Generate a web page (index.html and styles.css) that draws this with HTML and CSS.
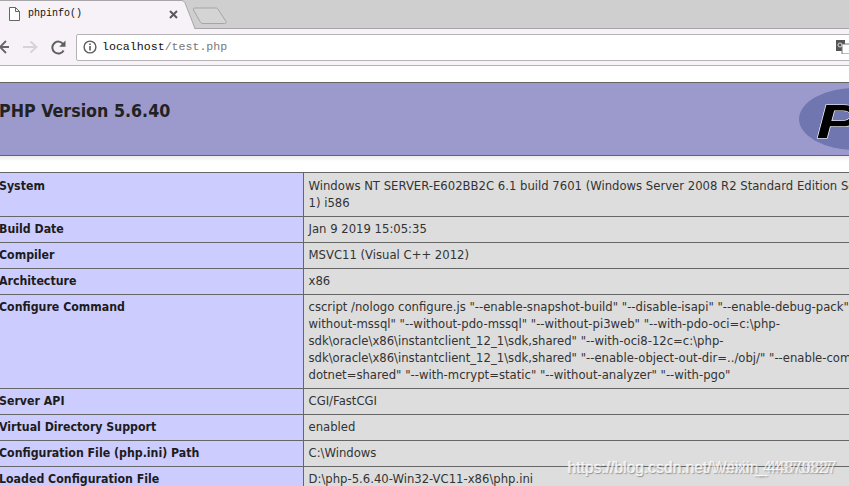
FILE: index.html
```html
<!DOCTYPE html>
<html lang="en">
<head>
<meta charset="utf-8">
<title>phpinfo()</title>
<link rel="stylesheet" href="styles.css">
</head>
<body>
<div class="browser">
  <div class="tabstrip">
    <svg class="tab-shape" width="240" height="29" viewBox="0 0 240 29">
      <path d="M-2 .5H181C183 .5 184 1.5 185 3L195 28.5H240" fill="none" stroke="#a8a5a8"/>
      <path d="M-2 1H181C183 1 184 2 184.500 3L194.500 29H-2Z" fill="#f6f2f7"/>
      <path d="M195 8H215.500C217 8 218 8.500 218.500 10L226 21.500C226.500 23 226 23.500 224.500 23.500H203C201.500 23.500 200.800 23 200 21.500L193.500 10C193 8.800 193.500 8 195 8Z" fill="#d4d4d4" stroke="#a5a5a5"/>
    </svg>
    <svg class="page-icon" width="11" height="14" viewBox="0 0 11 14"><path d="M.5.500H6.500L10.500 4.500V13.500H.5ZM6.500.500V4.500H10.500" fill="#fff" stroke="#666"/></svg>
    <span class="tab-title">phpinfo()</span>
    <svg class="tab-close" width="9" height="9" viewBox="0 0 9 9"><path d="M1 1L8 8M8 1L1 8" stroke="#5a5a5a" stroke-width="2"/></svg>
  </div>
  <div class="toolbar">
    <svg class="nav back" width="10" height="14" viewBox="0 0 10 14"><path d="M10 7H1M7 1L1 7L7 13" fill="none" stroke="#666" stroke-width="1.800"/></svg>
    <svg class="nav forward" width="15" height="14" viewBox="0 0 15 14"><path d="M0 7H13M7.500 1.500L13.500 7L7.500 12.500" fill="none" stroke="#d6d3d6" stroke-width="1.800"/></svg>
    <svg class="nav reload" width="15" height="15" viewBox="0 0 15 15"><path d="M12.600 10.500A6 6 0 1 1 12.300 4.200" fill="none" stroke="#5f5f5f" stroke-width="2"/><path d="M14.500 .5V6.800H8.200Z" fill="#5f5f5f"/></svg>
    <div class="omnibox">
      <svg class="info" width="14" height="14" viewBox="0 0 14 14"><circle cx="7" cy="7" r="5.900" fill="none" stroke="#5a5a5a" stroke-width="1.400"/><path d="M7 6V10.500M7 3.500V5" stroke="#5a5a5a" stroke-width="1.600"/></svg>
      <span class="url"><span class="host">localhost</span><span class="path">/test.php</span></span>
      <svg class="translate" width="14" height="14" viewBox="0 0 14 14"><rect x="0" y="0" width="9" height="11" fill="#555"/><rect x="6" y="4" width="8" height="10" fill="#fff" stroke="#777"/><circle cx="4" cy="5" r="2" fill="none" stroke="#ddd"/></svg>
    </div>
  </div>
</div>
<main class="page">
  <div class="banner">
    <h1 class="version">PHP Version 5.6.40</h1>
    <svg class="logo" width="50" height="66" viewBox="0 0 50 66">
      <ellipse cx="57" cy="33" rx="57" ry="31" fill="#6f76b0"/>
      <text class="logo-letter" x="13" y="52" transform="scale(1.350 1)">P</text>
    </svg>
  </div>
  <div class="banner-shadow"></div>
  <table class="info-table">
    <tr class="two-lines"><th>System</th><td>Windows NT SERVER-E602BB2C 6.1 build 7601 (Windows Server 2008 R2 Standard Edition Service Pack<br>1) i586</td></tr>
    <tr><th>Build Date</th><td>Jan 9 2019 15:05:35</td></tr>
    <tr><th>Compiler</th><td>MSVC11 (Visual C++ 2012)</td></tr>
    <tr><th>Architecture</th><td>x86</td></tr>
    <tr><th>Configure Command</th><td>cscript /nologo configure.js "--enable-snapshot-build" "--disable-isapi" "--enable-debug-pack" "--<br>without-mssql" "--without-pdo-mssql" "--without-pi3web" "--with-pdo-oci=c:\php-<br>sdk\oracle\x86\instantclient_12_1\sdk,shared" "--with-oci8-12c=c:\php-<br>sdk\oracle\x86\instantclient_12_1\sdk,shared" "--enable-object-out-dir=../obj/" "--enable-com-<br>dotnet=shared" "--with-mcrypt=static" "--without-analyzer" "--with-pgo"</td></tr>
    <tr><th>Server API</th><td>CGI/FastCGI</td></tr>
    <tr><th>Virtual Directory Support</th><td>enabled</td></tr>
    <tr><th>Configuration File (php.ini) Path</th><td>C:\Windows</td></tr>
    <tr><th>Loaded Configuration File</th><td>D:\php-5.6.40-Win32-VC11-x86\php.ini</td></tr>
  </table>
</main>
<div class="watermark"><span>https://blog.csdn.net/weixin_44370627</span><span class="ghost">https://blog.csdn.net/Weixin_44870827</span></div>
</body>
</html>
```
FILE: styles.css
```css
html, body { margin: 0; padding: 0; }
body {
  width: 849px;
  height: 486px;
  overflow: hidden;
  position: relative;
  background: #fff;
  font-family: "DejaVu Sans", Verdana, sans-serif;
  color: #222;
}
.tabstrip {
  position: relative;
  height: 29px;
  background: #cfcfcf;
  border-bottom: 1px solid #a8a5a8;
  box-sizing: border-box;
  display: flex;
  align-items: center;
}
.tab-shape { position: absolute; left: 0; top: 0; }
.page-icon { position: relative; margin-left: 9px; flex: none; }
.tab-title {
  position: relative;
  margin-left: 8px;
  width: 141px;
  font: 10px/14px "Liberation Mono", monospace;
  color: #111;
  flex: none;
}
.tab-close { position: relative; flex: none; }
.toolbar {
  height: 36px;
  background: #f6f2f7;
  border-bottom: 1px solid #b5b3b5;
  display: flex;
  align-items: center;
}
.nav { flex: none; }
.back { margin-left: -1px; }
.forward { margin-left: 14px; }
.reload { margin-left: 13px; }
.omnibox {
  margin-left: 10px;
  width: 820px;
  height: 27px;
  flex: none;
  background: #fff;
  border: 1px solid #b5b3b5;
  border-radius: 2px;
  box-sizing: border-box;
  display: flex;
  align-items: center;
}
.info { margin-left: 6px; flex: none; }
.url {
  margin-left: 5px;
  font: 11.600px/14px "Liberation Mono", monospace;
  width: 734px;
  flex: none;
}
.host { color: #111; }
.path { color: #777; }
.translate { flex: none; }
.page { padding-top: 16px; }
.banner {
  height: 72px;
  background: #9c99cc;
  border-top: 1px solid #666;
  border-bottom: 1px solid #666;
  display: flex;
  justify-content: space-between;
  overflow: hidden;
}
.version {
  margin: 16px 0 0 -1px;
  font: bold 17.700px/24px "DejaVu Sans Condensed", "DejaVu Sans", sans-serif;
  font-stretch: condensed;
  color: #222;
}
.logo { margin-top: 3px; flex: none; }
.logo-letter {
  font: italic bold 48px "Liberation Sans", Arial, sans-serif;
  fill: #000;
  stroke: #fff;
  stroke-width: 1;
  paint-order: stroke;
}
.banner-shadow {
  height: 16px;
  background: linear-gradient(#ececec, #fff 5px);
}
.info-table {
  border-collapse: collapse;
  table-layout: fixed;
  width: 1000px;
  font-size: 11.650px;
  line-height: 17px;
}
.info-table th, .info-table td {
  border: 1px solid #666;
  border-left: 0;
  vertical-align: top;
  padding: 4px 5px;
  height: 17px;
  white-space: nowrap;
}
.info-table th {
  width: 303px;
  padding-left: 0;
  box-sizing: border-box;
  background: #ccccff;
  text-align: left;
  color: #1c1c1c;
  font: bold 12.250px/17px "DejaVu Sans Condensed", "DejaVu Sans", sans-serif;
  font-stretch: condensed;
  text-indent: -1px;
}
.info-table td {
  background: #dddddd;
  color: #333;
}
.two-lines th, .two-lines td { padding-top: 5px; }
.watermark {
  position: absolute;
  left: 567px;
  top: 459px;
  font: 15.600px/18px "Liberation Sans", Arial, sans-serif;
  color: rgba(255, 255, 255, .75);
  text-shadow: 1px 1px 1px rgba(110, 110, 110, .45);
  white-space: nowrap;
}
.watermark span { display: block; }
.watermark .ghost { position: absolute; left: 1px; top: 0; }
```
